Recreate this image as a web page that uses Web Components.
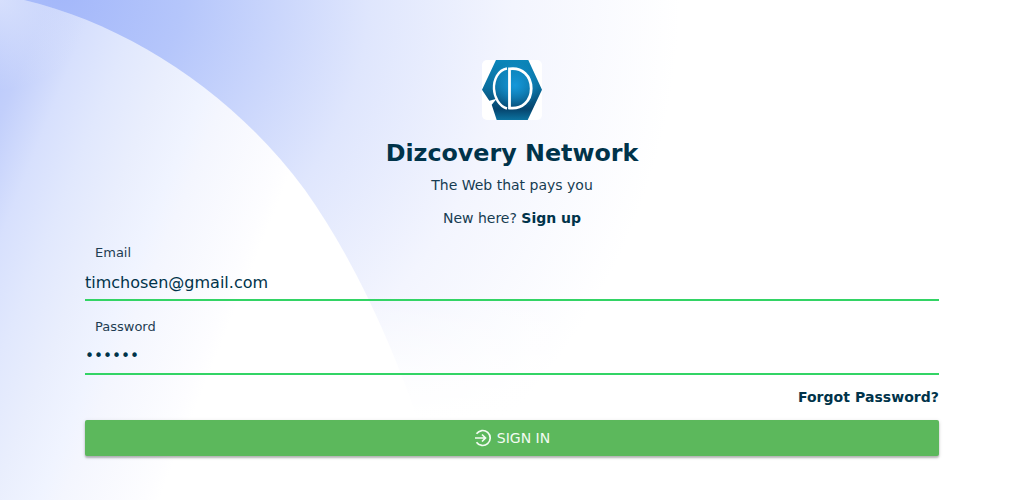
<!DOCTYPE html>
<html lang="en">
<head>
<meta charset="utf-8">
<title>Dizcovery Network</title>
<style>
	html, body { margin: 0; height: 100%; background: #fff; }
	body { font-family: "DejaVu Sans", sans-serif; color: #00334a; }
	b { color: #00334a; }
</style>
</head>
<body>
<login-page>
	<brand-logo slot="logo"></brand-logo>
	<h1 slot="title">Dizcovery Network</h1>
	<span slot="tagline">The Web that pays you</span>
	<span slot="signup">New here? <b>Sign up</b></span>
	<text-field slot="fields" label="Email" value="timchosen@gmail.com"></text-field>
	<text-field slot="fields" label="Password" value="••••••" secret></text-field>
	<span slot="forgot">Forgot Password?</span>
	<sign-button slot="action">SIGN IN</sign-button>
</login-page>

<script>
class BrandLogo extends HTMLElement {
	constructor() {
		super();
		this.attachShadow({ mode: "open" });
		this.shadowRoot.innerHTML = `
		<style>
			:host { display: block; width: 60px; height: 60px; background: #fff; border-radius: 5px; }
			svg { display: block; }
		</style>
		<svg width="60" height="60" viewBox="0 0 60 60" fill="none">
			<defs>
				<linearGradient id="hex" x1="0" y1="0" x2="0" y2="1">
					<stop offset="0" stop-color="#0b86ba"/>
					<stop offset=".45" stop-color="#0a6f9f"/>
					<stop offset=".82" stop-color="#06456e"/>
					<stop offset="1" stop-color="#0b729f"/>
				</linearGradient>
				<radialGradient id="glow" cx=".55" cy=".42" r=".4">
					<stop offset="0" stop-color="#1598da"/>
					<stop offset="1" stop-color="#1598da" stop-opacity="0"/>
				</radialGradient>
			</defs>
			<path d="M14 0H46.300L60 29.700 45.700 60H14.700L9.700 44.700 14.700 38.700 7.300 40.700 0 29.700Z" fill="url(#hex)"/>
			<path d="M14 0H46.300L60 29.700 45.700 60H14.700L9.700 44.700 14.700 38.700 7.300 40.700 0 29.700Z" fill="url(#glow)"/>
			<path d="M25 8.500C16 10 11.500 20 12 29 12.300 37 17 46 25 48.500" stroke="#fff" stroke-width="2.400"/>
			<path d="M27.500 8.800C40 7 49.200 16 49.200 28.500S40 49.500 27.500 48Z" stroke="#fff" stroke-width="2.800"/>
		</svg>`;
	}
}

class TextField extends HTMLElement {
	static observedAttributes = ["label", "value"];

	constructor() {
		super();
		this.attachShadow({ mode: "open" });
		this.shadowRoot.innerHTML = `
		<style>
			:host { display: block; height: 74px; box-sizing: border-box; padding-top: 15px; }
			label { display: block; font-size: 13px; line-height: 16px; padding-left: 10px; color: #1f3d52; }
			.value {
				height: 35px; line-height: 37px; font-size: 16px; color: #00334a;
				border-bottom: 2px solid #33d465; margin-top: 3px;
			}
			:host([secret]) .value { font-size: 15.300px; }
		</style>
		<label></label>
		<div class="value"></div>`;
	}

	connectedCallback() {
		this.#render();
	}

	attributeChangedCallback() {
		this.#render();
	}

	#render() {
		this.shadowRoot.querySelector("label").textContent = this.getAttribute("label");
		this.shadowRoot.querySelector(".value").textContent = this.getAttribute("value");
	}
}

class SignButton extends HTMLElement {
	constructor() {
		super();
		this.attachShadow({ mode: "open" });
		this.shadowRoot.innerHTML = `
		<style>
			:host {
				display: flex; align-items: center; justify-content: center; gap: 5px;
				height: 36px; box-sizing: border-box; padding-bottom: 1px;
				background: #5cb85c; color: #f2fbf2; border-radius: 2px;
				font-size: 14px; box-shadow: 0 2px 2px rgba(0,0,0,.24), 0 1px 4px rgba(0,0,0,.12);
			}
			svg { display: block; }
		</style>
		<svg width="18" height="18" viewBox="0 0 18 18" fill="none" stroke="#f2fbf2" stroke-width="1.700">
			<path d="M2.500 4.800A7.500 7.500 0 1 1 2.500 13.200"/>
			<path d="M1 9H11.500M8 5.500 11.500 9 8 12.500"/>
		</svg>
		<slot></slot>`;
	}
}

class LoginPage extends HTMLElement {
	constructor() {
		super();
		this.attachShadow({ mode: "open" });
		this.shadowRoot.innerHTML = `
		<style>
			:host {
				display: flex; flex-direction: column; align-items: center;
				position: relative; box-sizing: border-box;
				width: 1024px; height: 500px; overflow: hidden; padding: 60px 85px 0;
			}
			.backdrop { position: absolute; inset: 0; z-index: 0; }
			.content { position: relative; z-index: 1; width: 100%; display: flex; flex-direction: column; align-items: center; }
			::slotted(h1) { margin: 15px 0 0; font-size: 23.800px; line-height: 36px; font-weight: 700; color: #00334a; }
			.tagline { margin-top: 4px; font-size: 14px; line-height: 20px; color: #163c52; }
			.signup { margin-top: 13px; font-size: 14px; line-height: 20px; color: #163c52; }
			.fields { width: 100%; margin-top: 2px; }
			.forgot { width: 100%; margin-top: 9px; text-align: right; font-size: 14px; line-height: 20px; font-weight: 700; letter-spacing: .05px; color: #00334a; }
			.action { width: 100%; margin-top: 13px; }
		</style>
		<svg class="backdrop" width="1024" height="500" viewBox="0 0 1024 500">
			<defs>
				<radialGradient id="outer" gradientUnits="userSpaceOnUse" cx="60" cy="-10" r="620">
					<stop offset="0" stop-color="#a3b7fa"/>
					<stop offset=".2" stop-color="#b5c6fb"/>
					<stop offset=".5" stop-color="#dfe6fd"/>
					<stop offset=".73" stop-color="#f3f5fe"/>
					<stop offset="1" stop-color="#fff"/>
				</radialGradient>
				<linearGradient id="lower" gradientUnits="userSpaceOnUse" x1="0" y1="290" x2="0" y2="420">
					<stop offset="0" stop-color="#fff" stop-opacity="0"/>
					<stop offset="1" stop-color="#fff"/>
				</linearGradient>
				<linearGradient id="inner" gradientUnits="userSpaceOnUse" x1="0" y1="0" x2="310" y2="125">
					<stop offset="0" stop-color="#b6c6fb"/>
					<stop offset=".133" stop-color="#c2cffb"/>
					<stop offset=".267" stop-color="#d7e0fd"/>
					<stop offset=".4" stop-color="#e1e8fd"/>
					<stop offset=".533" stop-color="#e9eefd"/>
					<stop offset=".667" stop-color="#f0f4ff"/>
					<stop offset=".73" stop-color="#f4f6fe"/>
					<stop offset=".96" stop-color="#fdfdff"/>
					<stop offset="1" stop-color="#fff"/>
				</linearGradient>
				<radialGradient id="corner" gradientUnits="userSpaceOnUse" cx="0" cy="0" r="90">
					<stop offset="0" stop-color="#e4eafd" stop-opacity=".7"/>
					<stop offset="1" stop-color="#e4eafd" stop-opacity="0"/>
				</radialGradient>
			</defs>
			<rect width="1024" height="500" fill="url(#outer)"/>
			<rect width="1024" height="500" fill="url(#lower)"/>
			<path d="M24 0C130 25 235 95 305 190C355 260 395 350 425 440V500H0V0Z" fill="url(#inner)"/>
			<path d="M24 0C130 25 235 95 305 190C355 260 395 350 425 440V500H0V0Z" fill="url(#corner)"/>
		</svg>
		<div class="content">
			<slot name="logo"></slot>
			<slot name="title"></slot>
			<div class="tagline"><slot name="tagline"></slot></div>
			<div class="signup"><slot name="signup"></slot></div>
			<div class="fields"><slot name="fields"></slot></div>
			<div class="forgot"><slot name="forgot"></slot></div>
			<div class="action"><slot name="action"></slot></div>
		</div>`;
	}
}

customElements.define("brand-logo", BrandLogo);
customElements.define("text-field", TextField);
customElements.define("sign-button", SignButton);
customElements.define("login-page", LoginPage);
</script>
</body>
</html>
